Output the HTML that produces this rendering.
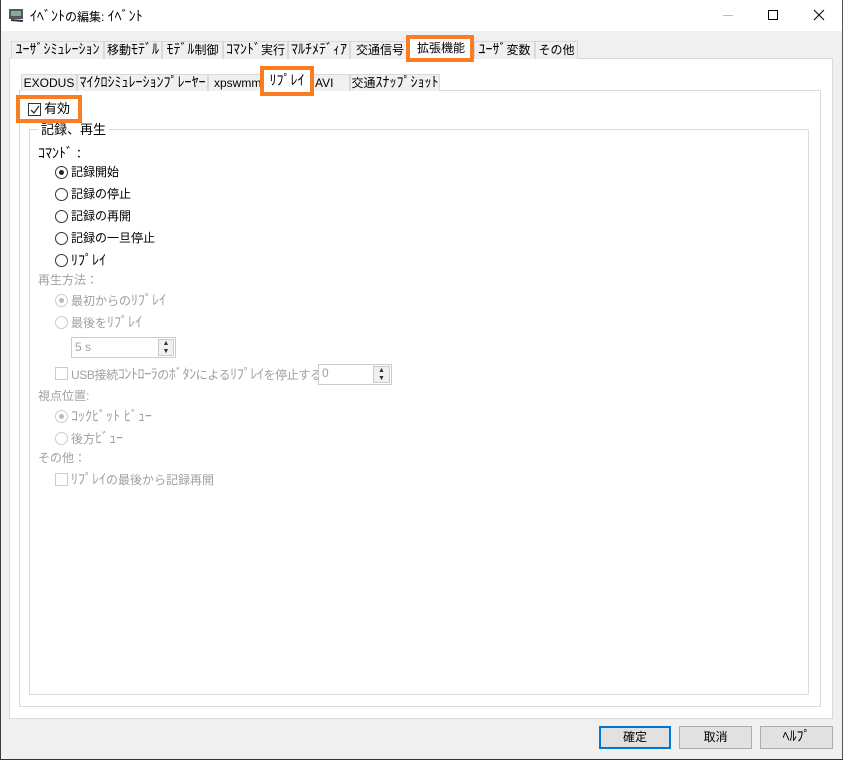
<!DOCTYPE html>
<html><head><meta charset="utf-8"><style>
*{box-sizing:border-box;margin:0;padding:0}
body{width:843px;height:760px;position:relative;background:#f0f0f0;font-family:"Liberation Sans","Noto Sans CJK JP",sans-serif;font-size:12px;color:#000;overflow:hidden}
.a{position:absolute}
.k{font-size:14px;line-height:1}
.tab{position:absolute;height:18px;border:1px solid #d9d9d9;border-bottom:none;background:#f0f0f0;text-align:center;line-height:17px;font-size:12px;white-space:nowrap;overflow:hidden}
.or{position:absolute;border:4px solid #fa7d22}
.rad{position:absolute;width:13px;height:13px;border:1px solid #333;border-radius:50%;background:#fff}
.rad.g{border-color:#ccc}
.lbl{position:absolute;white-space:nowrap;line-height:14px}
.gr{color:#a0a0a0}
.cb{position:absolute;width:13px;height:13px;border:1px solid #ccc;background:#fff}
.btn{position:absolute;height:23px;border:1px solid #adadad;background:#e1e1e1;text-align:center;line-height:21px}
</style></head><body>
<div class="a" style="left:0;top:0;width:843px;height:31px;background:#fff"></div>
<div class="a" style="left:0;top:0;width:1px;height:760px;background:#3a3a3a"></div>
<div class="a" style="left:842px;top:0;width:1px;height:760px;background:#555"></div>
<div class="a" style="left:0;top:759px;width:843px;height:1px;background:#333"></div>
<svg class="a" style="left:8px;top:7px" width="18" height="16"><rect x="1" y="2" width="14" height="10" fill="#556" /><rect x="3" y="4" width="10" height="5" fill="#8a9"/><path d="M3 13l12 1" stroke="#333" stroke-width="2"/></svg>
<div class="lbl" style="left:30px;top:9px"><span class="k">ｲﾍﾞﾝﾄ</span>の編集: <span class="k">ｲﾍﾞﾝﾄ</span></div>
<div class="a" style="left:723px;top:15px;width:10px;height:1px;background:#bbb"></div>
<div class="a" style="left:768px;top:10px;width:10px;height:10px;border:1px solid #000"></div>
<svg class="a" style="left:813px;top:9px" width="12" height="12"><path d="M1 1L11 11M11 1L1 11" stroke="#000" stroke-width="1"/></svg>

<div class="a" style="left:9px;top:58px;width:824px;height:661px;background:#fff;border:1px solid #d9d9d9"></div>
<div class="tab" style="left:11px;top:41px;width:93px"><span class="k">ﾕｰｻﾞｼﾐｭﾚｰｼｮﾝ</span></div>
<div class="tab" style="left:104px;top:41px;width:58px">移動<span class="k">ﾓﾃﾞﾙ</span></div>
<div class="tab" style="left:162px;top:41px;width:61px"><span class="k">ﾓﾃﾞﾙ</span>制御</div>
<div class="tab" style="left:223px;top:41px;width:65px"><span class="k">ｺﾏﾝﾄﾞ</span>実行</div>
<div class="tab" style="left:288px;top:41px;width:62px"><span class="k">ﾏﾙﾁﾒﾃﾞｨｱ</span></div>
<div class="tab" style="left:350px;top:41px;width:60px">交通信号</div>
<div class="tab" style="left:408px;top:39px;width:66px;height:20px;background:#fff;border-color:#fff">拡張機能</div>
<div class="tab" style="left:474px;top:41px;width:61px"><span class="k">ﾕｰｻﾞ</span>変数</div>
<div class="tab" style="left:535px;top:41px;width:43px">その他</div>
<div class="or" style="left:406px;top:35px;width:68px;height:27px"></div>

<div class="a" style="left:19px;top:90px;width:802px;height:617px;background:#fff;border:1px solid #d9d9d9"></div>
<div class="tab" style="left:21px;top:74px;width:56px;height:17px">EXODUS</div>
<div class="tab" style="left:77px;top:74px;width:131px;height:17px"><span class="k">ﾏｲｸﾛｼﾐｭﾚｰｼｮﾝﾌﾟﾚｰﾔｰ</span></div>
<div class="tab" style="left:208px;top:74px;width:55px;height:17px;text-align:left;padding-left:5px">xpswmm</div>
<div class="tab" style="left:263px;top:72px;width:48px;height:19px;background:#fff;border-color:#fff"><span class="k">ﾘﾌﾟﾚｲ</span></div>
<div class="tab" style="left:311px;top:74px;width:39px;height:17px;text-align:left;padding-left:3px">AVI</div>
<div class="tab" style="left:350px;top:74px;width:90px;height:17px">交通<span class="k">ｽﾅｯﾌﾟｼｮｯﾄ</span></div>
<div class="or" style="left:260px;top:66px;width:54px;height:30px"></div>

<div class="a" style="left:29px;top:129px;width:780px;height:566px;border:1px solid #dcdcdc"></div>
<div class="lbl" style="left:38px;top:123px;background:#fff;padding:0 3px;font-size:13px">記録、再生</div>
<div class="or" style="left:16px;top:95px;width:66px;height:28px"></div>
<div class="cb" style="left:28px;top:103px;border-color:#333"></div>
<svg class="a" style="left:29px;top:104px" width="12" height="12"><path d="M2 6l3 3 5-7" stroke="#333" stroke-width="1.3" fill="none"/></svg>
<div class="lbl" style="left:44px;top:102px;font-size:13px">有効</div>

<div class="lbl" style="left:38px;top:146px"><span class="k">ｺﾏﾝﾄﾞ</span>：</div>
<div class="rad" style="left:55px;top:166px"></div><div class="a" style="left:59px;top:170px;width:5px;height:5px;border-radius:50%;background:#222"></div>
<div class="lbl" style="left:71px;top:165px">記録開始</div>
<div class="rad" style="left:55px;top:188px"></div><div class="lbl" style="left:71px;top:187px">記録の停止</div>
<div class="rad" style="left:55px;top:210px"></div><div class="lbl" style="left:71px;top:209px">記録の再開</div>
<div class="rad" style="left:55px;top:232px"></div><div class="lbl" style="left:71px;top:231px">記録の一旦停止</div>
<div class="rad" style="left:55px;top:254px"></div><div class="lbl" style="left:71px;top:253px"><span class="k">ﾘﾌﾟﾚｲ</span></div>
<div class="lbl gr" style="left:38px;top:273px">再生方法：</div>
<div class="rad g" style="left:55px;top:294px"></div><div class="a" style="left:59px;top:298px;width:5px;height:5px;border-radius:50%;background:#bbb"></div>
<div class="lbl gr" style="left:71px;top:293px">最初からの<span class="k">ﾘﾌﾟﾚｲ</span></div>
<div class="rad g" style="left:55px;top:316px"></div><div class="lbl gr" style="left:71px;top:315px">最後を<span class="k">ﾘﾌﾟﾚｲ</span></div>
<div class="a" style="left:71px;top:337px;width:105px;height:21px;border:1px solid #ccc;background:#fff"></div>
<div class="lbl gr" style="left:75px;top:340px">5 s</div>
<div class="a" style="left:158px;top:339px;width:16px;height:17px;border:1px solid #ccc;background:#f0f0f0;font-size:7px;line-height:8px;text-align:center;color:#333">▲<br>▼</div>
<div class="cb" style="left:55px;top:367px"></div><div class="lbl gr" style="left:71px;top:367px;letter-spacing:-0.4px">USB接続<span class="k">ｺﾝﾄﾛｰﾗ</span>の<span class="k">ﾎﾞﾀﾝ</span>による<span class="k">ﾘﾌﾟﾚｲ</span>を停止する</div>
<div class="a" style="left:318px;top:364px;width:74px;height:21px;border:1px solid #ccc;background:#fff"></div>
<div class="lbl gr" style="left:322px;top:366px">0</div>
<div class="a" style="left:373px;top:366px;width:17px;height:17px;border:1px solid #ccc;background:#f0f0f0;font-size:7px;line-height:8px;text-align:center;color:#333">▲<br>▼</div>
<div class="lbl gr" style="left:38px;top:389px">視点位置:</div>
<div class="rad g" style="left:55px;top:410px"></div><div class="a" style="left:59px;top:414px;width:5px;height:5px;border-radius:50%;background:#bbb"></div>
<div class="lbl gr" style="left:71px;top:409px"><span class="k">ｺｯｸﾋﾟｯﾄ ﾋﾞｭｰ</span></div>
<div class="rad g" style="left:55px;top:432px"></div><div class="lbl gr" style="left:71px;top:431px">後方<span class="k">ﾋﾞｭｰ</span></div>
<div class="lbl gr" style="left:38px;top:451px">その他：</div>
<div class="cb" style="left:55px;top:473px"></div><div class="lbl gr" style="left:71px;top:472px"><span class="k">ﾘﾌﾟﾚｲ</span>の最後から記録再開</div>

<div class="btn" style="left:599px;top:726px;width:72px;border:2px solid #0078d7;line-height:19px">確定</div>
<div class="btn" style="left:679px;top:726px;width:73px">取消</div>
<div class="btn" style="left:760px;top:726px;width:73px"><span class="k">ﾍﾙﾌﾟ</span></div>
</body></html>
